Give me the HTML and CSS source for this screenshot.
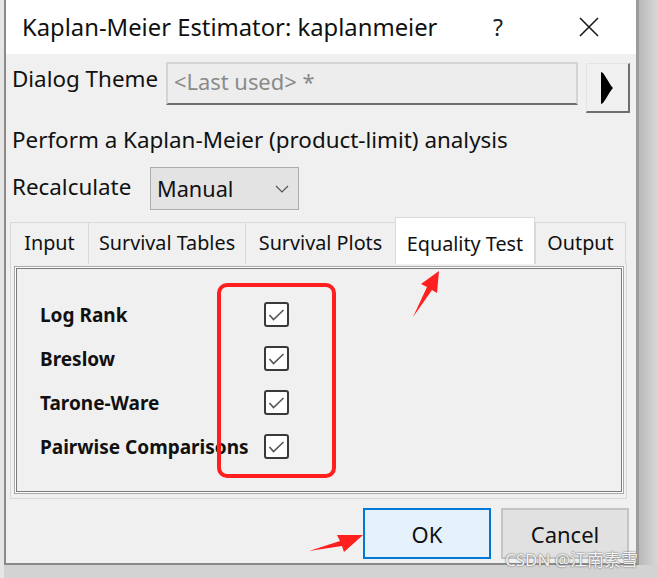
FILE: index.html
```html
<!DOCTYPE html>
<html>
<head>
<meta charset="utf-8">
<link rel="stylesheet" href="styles.css">
</head>
<body>
<div class="screen">
  <div class="window">
    <div class="titlebar">
      <div class="title">Kaplan-Meier Estimator: kaplanmeier</div>
      <div class="help">?</div>
      <div class="close">
        <svg width="20" height="20" viewBox="0 0 20 20"><path d="M1 1 L19 19 M19 1 L1 19" stroke="#1a1a1a" stroke-width="1.6" fill="none"/></svg>
      </div>
    </div>
    <div class="body">
      <div class="theme-row">
        <div class="label theme-label">Dialog Theme</div>
        <div class="theme-input">&lt;Last used&gt; *</div>
        <div class="theme-btn">
          <svg width="14" height="32" viewBox="0 0 14 32"><path d="M1 0 L3 1 C8 8 10 13 13 16 C10 19 8 24 3 31 L1 32 Z" fill="#000"/></svg>
        </div>
      </div>
      <div class="label desc">Perform a Kaplan-Meier (product-limit) analysis</div>
      <div class="recalc-row">
        <div class="label">Recalculate</div>
        <div class="select">
          <span>Manual</span>
          <svg width="14" height="8" viewBox="0 0 14 8"><path d="M1 1 L7 7 L13 1" stroke="#555" stroke-width="1.2" fill="none"/></svg>
        </div>
      </div>
      <div class="tabs">
        <div class="tab t-input">Input</div>
        <div class="tab t-tables">Survival Tables</div>
        <div class="tab t-plots">Survival Plots</div>
        <div class="tab t-equal active">Equality Test</div>
        <div class="tab t-output">Output</div>
      </div>
      <div class="pane">
        <div class="frame">
          <div class="row">
            <div class="opt">Log Rank</div>
            <div class="cb"><svg width="25" height="25" viewBox="0 0 25 25"><rect x="1" y="1" width="23" height="23" rx="2" fill="#fff" stroke="#3a3a3a" stroke-width="2"/><path d="M5.5 13 L9.5 17.5 L19.5 8" stroke="#555" stroke-width="1.6" fill="none"/></svg></div>
          </div>
          <div class="row">
            <div class="opt">Breslow</div>
            <div class="cb"><svg width="25" height="25" viewBox="0 0 25 25"><rect x="1" y="1" width="23" height="23" rx="2" fill="#fff" stroke="#3a3a3a" stroke-width="2"/><path d="M5.5 13 L9.5 17.5 L19.5 8" stroke="#555" stroke-width="1.6" fill="none"/></svg></div>
          </div>
          <div class="row">
            <div class="opt">Tarone-Ware</div>
            <div class="cb"><svg width="25" height="25" viewBox="0 0 25 25"><rect x="1" y="1" width="23" height="23" rx="2" fill="#fff" stroke="#3a3a3a" stroke-width="2"/><path d="M5.5 13 L9.5 17.5 L19.5 8" stroke="#555" stroke-width="1.6" fill="none"/></svg></div>
          </div>
          <div class="row">
            <div class="opt">Pairwise Comparisons</div>
            <div class="cb"><svg width="25" height="25" viewBox="0 0 25 25"><rect x="1" y="1" width="23" height="23" rx="2" fill="#fff" stroke="#3a3a3a" stroke-width="2"/><path d="M5.5 13 L9.5 17.5 L19.5 8" stroke="#555" stroke-width="1.6" fill="none"/></svg></div>
          </div>
        </div>
      </div>
      <div class="buttons">
        <div class="btn ok">OK</div>
        <div class="btn cancel">Cancel</div>
      </div>
    </div>
  </div>
  <div class="shadow-right"></div>

  <div class="redbox"></div>
  <svg class="arrows" width="658" height="578" viewBox="0 0 658 578">
    <path d="M413 317 L427 287 L421 284 L439 271 L437 293 L432 290 Z" fill="#ff1f1f"/>
    <path d="M309 551 L340 541 L337 535 L363 535 L344 552 L342 546 Z" fill="#ff1f1f"/>
  </svg>
  <div class="watermark">CSDN @江南素雪</div>
</div>
</body>
</html>
```
FILE: styles.css
```css
html, body {
  margin: 0;
  padding: 0;
}
body {
  width: 658px;
  height: 578px;
  overflow: hidden;
  background: #d3d3d3;
  font-family: "Noto Sans", "Noto Sans CJK SC", sans-serif;
  color: #000;
}
.screen {
  position: relative;
  width: 658px;
  height: 578px;
  display: flex;
  background: linear-gradient(to right, #e6e6e6 0 4px, #d3d3d3 4px);
}
.window {
  margin-left: 4px;
  width: 635px;
  height: 565px;
  box-sizing: border-box;
  border-left: 2px solid #8a8a8a;
  border-right: 3px solid #9c9c9c;
  border-bottom: 2px solid #8a8a8a;
  background: #f0f0f0;
  display: flex;
  flex-direction: column;
}
.shadow-right {
  width: 19px;
  height: 565px;
  background: linear-gradient(to right, #b9b9b9, #d8d8d8);
}
.titlebar {
  height: 54px;
  background: #fff;
  display: flex;
  align-items: center;
  flex-shrink: 0;
}
.title {
  margin-left: 16px;
  font-size: 23.8px;
  color: #111;
  width: 471px;
  white-space: nowrap;
}
.help {
  font-size: 23px;
  color: #222;
  width: 86px;
}
.close {
  display: flex;
  align-items: center;
}
.body {
  padding: 8px 0 0 6px;
  display: flex;
  flex-direction: column;
}
.label {
  font-size: 22.4px;
  color: #111;
  white-space: nowrap;
}
.theme-row {
  display: flex;
  align-items: flex-start;
  height: 52px;
}
.theme-label {
  width: 154px;
  padding-top: 1px;
}
.theme-input {
  width: 412px;
  height: 43px;
  box-sizing: border-box;
  border: 2px solid #d4d4d4;
  border-bottom: 2px solid #6e6e6e;
  background: #ededed;
  color: #8a8a8a;
  font-size: 21.9px;
  padding: 3px 0 0 6px;
}
.theme-btn {
  margin-left: 8px;
  margin-top: 1px;
  width: 44px;
  height: 50px;
  box-sizing: border-box;
  border-top: 1px solid #e4e4e4;
  border-left: 1px solid #e4e4e4;
  border-right: 2px solid #6e6e6e;
  border-bottom: 2px solid #6e6e6e;
  background: #f0f0f0;
  display: flex;
  align-items: center;
  padding-left: 13px;
}
.desc {
  margin-top: 10px;
  height: 32px;
}
.recalc-row {
  margin-top: 11px;
  display: flex;
  align-items: center;
  height: 43px;
}
.recalc-row .label {
  width: 138px;
  margin-top: -4px;
}
.select {
  width: 149px;
  height: 43px;
  box-sizing: border-box;
  border: 1px solid #adadad;
  background: #e3e3e3;
  display: flex;
  align-items: center;
  justify-content: space-between;
  padding: 0 9px 0 6px;
  font-size: 21.7px;
  color: #111;
}
.tabs {
  margin-top: 7px;
  margin-left: -2px;
  display: flex;
  align-items: flex-end;
  height: 47px;
  position: relative;
  z-index: 2;
}
.tab {
  height: 42px;
  box-sizing: border-box;
  border: 1px solid #d9d9d9;
  border-bottom: none;
  border-right: none;
  background: #f0f0f0;
  font-size: 19.8px;
  color: #111;
  display: flex;
  align-items: center;
  justify-content: center;
  padding-bottom: 2px;
}
.t-input { width: 78px; }
.t-tables { width: 157px; }
.t-plots { width: 150px; }
.t-equal { width: 140px; }
.t-output { width: 91px; border-right: 1px solid #d9d9d9; }
.tab.active {
  height: 47px;
  background: #fff;
  border: 1px solid #d9d9d9;
  border-bottom: none;
  padding-top: 6px;
}
.pane {
  margin-left: -2px;
  margin-top: -1px;
  width: 617px;
  height: 236px;
  box-sizing: border-box;
  border: 1px solid #d9d9d9;
  padding: 2px 2px 4px 3px;
}
.frame {
  height: 100%;
  box-sizing: border-box;
  border: 1px solid #a8a8a8;
  box-shadow: inset 0 0 0 1px #fff, inset 0 0 0 2px #7a7a7a;
  padding: 35px 0 0 25px;
  display: flex;
  flex-direction: column;
  gap: 19px;
}
.row {
  display: flex;
  align-items: center;
  height: 25px;
}
.opt {
  width: 224px;
  font-size: 19px;
  font-weight: bold;
  color: #111;
  white-space: nowrap;
}
.cb {
  display: flex;
}
.buttons {
  margin-top: 9px;
  display: flex;
  gap: 10px;
  padding-left: 351px;
}
.btn {
  width: 128px;
  height: 51px;
  box-sizing: border-box;
  display: flex;
  align-items: center;
  justify-content: center;
  font-size: 22px;
  color: #111;
}
.ok {
  border: 2px solid #0078d7;
  background: #e5f1fb;
}
.cancel {
  border: 2px solid #c4c4c4;
  background: #e1e1e1;
}
.redbox {
  position: absolute;
  left: 217px;
  top: 283px;
  width: 119px;
  height: 195px;
  box-sizing: border-box;
  border: 4px solid #ff1f1f;
  border-radius: 10px;
}
.arrows {
  position: absolute;
  left: 0;
  top: 0;
}
.watermark {
  position: absolute;
  left: 505px;
  top: 546px;
  font-size: 17px;
  color: #f2f2f2;
  text-shadow: 0 0 2px #666, 0 0 1px #888;
  white-space: nowrap;
}
```
